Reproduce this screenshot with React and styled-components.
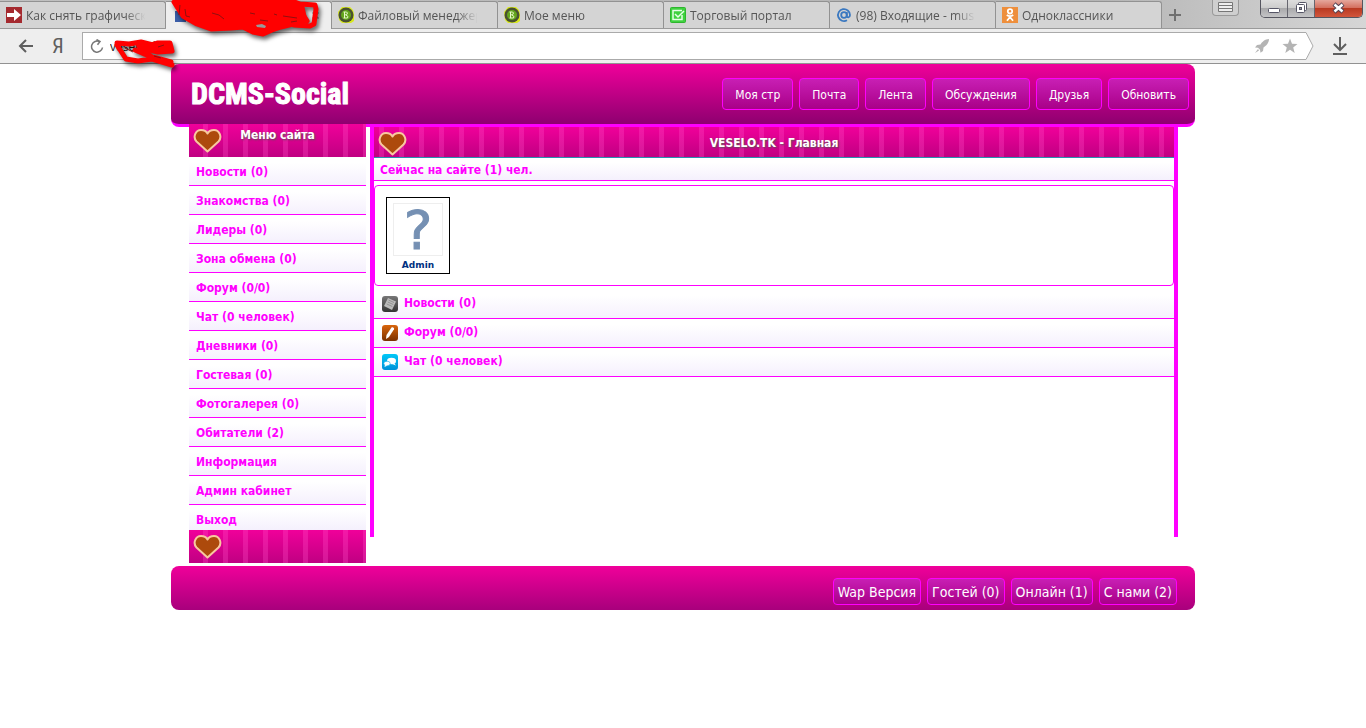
import React from 'react';
import styled, { createGlobalStyle } from 'styled-components';

const GlobalStyle = createGlobalStyle`
    * {
        box-sizing: border-box;
    }

    body {
        margin: 0;
        background-color: #ffffff;
        font-family: 'Tahoma', 'DejaVu Sans Condensed', 'DejaVu Sans', sans-serif;
        font-size: 12px;
    }
`

/* browser window */

const Browser = styled.header`
    position: relative;
    color: #555555;
    font-family: 'Open Sans', 'Noto Sans', sans-serif;
    border-bottom: 1px solid #929292;
`
const TabBar = styled.div`
    display: flex;
    align-items: flex-start;
    height: 29px;
    padding-top: 1px;
    background: linear-gradient(to right, #c0c0c0, #b4b4b4 80%, #d6d6d6);
    border-bottom: 1px solid #9a9a9a;
`
const Tab = styled.button`
    display: flex;
    align-items: center;
    gap: 4px;
    flex: 0 1 166px;
    min-width: 0;
    height: ${({ $active }) => ($active ? '28px' : '27px')};
    padding: 0 12px 0 6px;
    border: 1px solid #929292;
    border-width: 1px 1px 0 0;
    border-radius: 0 3px 0 0;
    background-color: ${({ $active }) => ($active ? '#eeeeee' : '#d4d4d4')};
    color: inherit;
    font-family: inherit;
    font-size: 12px;
    text-align: left;
    white-space: nowrap;

    svg {
        flex: none;
    }
`
const TabText = styled.span`
    flex: 1;
    min-width: 0;
    overflow: hidden;
    mask-image: linear-gradient(to right, #000 78%, transparent 94%);
`
const PlusButton = styled.button`
    width: 26px;
    height: 28px;
    padding: 0;
    border: 0;
    background: none;
    line-height: 0;
`
const Controls = styled.div`
    position: absolute;
    top: 0;
    right: 3px;
    display: flex;
    align-items: flex-start;
`
const SideButton = styled.button`
    display: flex;
    justify-content: center;
    width: 27px;
    height: 16px;
    margin-right: 21px;
    padding: 0;
    border: 1px solid #999999;
    border-top: 0;
    border-radius: 0 0 4px 4px;
    background-color: #cfcfcf;
`
const WindowButtons = styled.div`
    display: flex;
    height: 18px;
    border: 1px solid #55555f;
    border-top: 0;
    border-radius: 0 0 5px 5px;
    overflow: hidden;
`
const WindowButton = styled.button`
    display: flex;
    justify-content: center;
    width: 27px;
    padding: 0;
    border: 0;
    border-right: 1px solid #66666f;
    background: linear-gradient(#dddddd, #cccccc 45%, #a9a9ab 50%, #c4c4c6);
`
const CloseButton = styled(WindowButton)`
    width: 47px;
    border-right: 0;
    background: linear-gradient(#e5a79c, #d4705f 45%, #b93a22 50%, #d2563c);
`
const Toolbar = styled.div`
    display: flex;
    align-items: center;
    height: 34px;
    background-color: #eeeeee;
`
const ToolButton = styled.button`
    width: 32px;
    padding: 0;
    border: 0;
    background: none;
    color: #5f5f5f;
    line-height: 0;
`
const DownloadButton = styled(ToolButton)`
    width: 52px;
`
const YandexLink = styled.a`
    width: 32px;
    color: #5f5f5f;
    font-family: 'Roboto Condensed', 'Roboto', sans-serif;
    font-size: 21px;
    line-height: 24px;
    text-align: center;
    text-decoration: none;
`
const BackGroup = styled.div`
    display: flex;
    align-items: center;
    justify-content: flex-end;
    width: 82px;
    padding-right: 8px;
`
const AddressBar = styled.label`
    display: flex;
    align-items: center;
    flex: 1;
    height: 28px;
    padding-left: 7px;
    border: 1px solid #aaaaaa;
    border-right: 0;
    background-color: #ffffff;
`
const AddressInput = styled.input`
    flex: 1;
    min-width: 0;
    padding: 0 6px;
    border: 0;
    outline: 0;
    color: #222222;
    font-family: inherit;
    font-size: 12px;
`
const AddressIcons = styled.span`
    display: flex;
    align-items: center;
    gap: 12px;
    padding-right: 7px;
`
const Scribble = styled.svg`
    position: absolute;
    top: 0;
    left: 105px;
    z-index: 2;
    overflow: visible;
    pointer-events: none;

    .marker {
        filter: drop-shadow(2px 3px 2px rgba(0, 0, 0, 0.6));
    }
`

/* site */

const Page = styled.div`
    max-width: 1024px;
    margin: 0 auto;
`
const Header = styled.div`
    display: flex;
    align-items: center;
    justify-content: space-between;
    height: 63px;
    padding: 0 6px 0 20px;
    border-bottom: 3px solid #ff00ff;
    border-radius: 8px;
    background: linear-gradient(#f0009a, #8e0070);
`
const Logo = styled.a`
    color: #ffffff;
    font-family: 'Impact', 'Roboto Condensed', 'Open Sans Condensed', 'Liberation Sans', sans-serif;
    font-size: 30px;
    font-weight: bold;
    line-height: 36px;
    text-decoration: none;
    -webkit-text-stroke: 1px #ffffff;
`
const Nav = styled.nav`
    display: flex;
    gap: 6px;
`
const NavLink = styled.a`
    padding: 2px 12px 0;
    border: 1px solid #ff00ff;
    border-radius: 4px;
    background: linear-gradient(#c81fb4, #a90088);
    color: #ffffff;
    font-size: 12px;
    line-height: 28px;
    text-decoration: none;
    white-space: nowrap;
`
const FooterLink = styled(NavLink)`
    padding: 1px 4px 0;
    font-size: 14px;
    line-height: 24px;
`
const Columns = styled.div`
    display: flex;
    gap: 4px;
    padding: 0 17px 0 18px;
`
const Sidebar = styled.aside`
    position: relative;
    width: 177px;
    margin-top: -3px;
`
const Striped = styled.div`
    position: relative;
    display: flex;
    justify-content: center;
    background-image:
        linear-gradient(to right, rgba(255, 80, 200, 0.3) 5px, transparent 5px),
        linear-gradient(#f0009a, #c00082);
    background-position: ${({ $shift }) => $shift} 0, 0 0;
    background-size: 20px 100%, 100% 100%;
`
const MenuBar = styled(Striped)`
    height: 33px;
    padding-top: 3px;
`
const MainBar = styled(Striped)`
    align-items: center;
    height: 31px;
    padding-top: 2px;
    border-bottom: 1px solid #2a8fb0;
`
const Title = styled.h2`
    margin: 0;
    color: #ffffff;
    font-size: 12px;
    line-height: 16px;
    text-shadow: 1px 1px 2px #555555;
`
const Heart = styled.svg`
    position: absolute;
    top: 4px;
    left: 4px;
`
const List = styled.ul`
    margin: 0;
    padding: 0;
    list-style: none;
`
const MenuItem = styled.li`
    height: 29px;
    border-bottom: 1px solid #ff00ff;
    background: linear-gradient(#ffffff 20%, #f5f0fd);

    &:last-child {
        height: 25px;
        border-bottom: 0;
    }
`
const ItemLink = styled.a`
    display: flex;
    gap: 6px;
    padding: 0 7px;
    color: #ff00ff;
    font-weight: bold;
    line-height: 30px;
    text-decoration: none;
`
const MainItem = styled(MenuItem)`
    &:last-child {
        height: 29px;
        border-bottom: 1px solid #ff00ff;
    }

    a {
        padding: 0 8px;
        line-height: 26px;
    }

    svg {
        margin-top: 6px;
    }
`
const Main = styled.main`
    flex: 1;
    margin-bottom: 26px;
    border: 4px solid #ff00ff;
    border-width: 0 4px;
`
const Status = styled.div`
    height: 23px;
    padding-left: 6px;
    border-bottom: 1px solid #ff00ff;
    background: linear-gradient(#ffffff 20%, #f5f0fd);
    color: #ff00ff;
    font-weight: bold;
    line-height: 24px;
`
const Users = styled.div`
    margin: 4px 0;
    padding: 11px;
    border: 1px solid #ff00ff;
    border-radius: 4px;
`
const UserCard = styled.a`
    display: flex;
    flex-direction: column;
    align-items: center;
    width: 64px;
    height: 77px;
    padding-top: 5px;
    border: 1px solid #000000;
    color: #003080;
    font-family: 'Verdana', 'DejaVu Sans', sans-serif;
    font-size: 9px;
    font-weight: bold;
    line-height: 18px;
    text-decoration: none;
`
const Avatar = styled.span`
    width: 50px;
    height: 53px;
    border: 1px solid #eeeeee;
    color: #7590b3;
    font-family: 'DejaVu Sans', sans-serif;
    font-size: 54px;
    font-weight: normal;
    line-height: 54px;
    text-align: center;
    -webkit-text-stroke: 1px #7590b3;
`
const Footer = styled.footer`
    display: flex;
    justify-content: flex-end;
    margin-top: 3px;
    padding: 12px 18px 5px;
    border-radius: 8px;
    background: linear-gradient(#f0009a, #a8007c);
`

const ArrowFavicon = () => (
    <svg width="16" height="16" viewBox="0 0 16 16">
        <rect width="16" height="16" fill="#a52a2f" />
        <path d="M1 6h7V2l7 6-7 6v-4H1z" fill="#fff" />
    </svg>
)
const SiteFavicon = () => (
    <svg width="16" height="16" viewBox="0 0 16 16">
        <rect x="3" y="3" width="11" height="11" fill="#3b5ea8" />
    </svg>
)
const CoinFavicon = () => (
    <svg width="16" height="16" viewBox="0 0 16 16">
        <path d="M4 0h8l3 3 1 4v7l-3 2H4l-3-3-1-8z" fill="#d8e820" />
        <circle cx="8" cy="8" r="7.5" fill="#4a5230" />
        <circle cx="8" cy="8" r="5" fill="#63a51c" />
        <path d="M6.500 5v6M5.500 5h3l1 1-1 1.800h-2M8 8l2 1.500-.5 1.500h-4" stroke="#e8f8c8" fill="none" />
    </svg>
)
const CheckFavicon = () => (
    <svg width="16" height="16" viewBox="0 0 16 16">
        <rect x=".5" y=".5" width="15" height="15" rx="1" fill="#3fd23f" stroke="#2fb52f" />
        <path d="M12 8v4.500H3v-9h9M5 7l3 3 6-6" stroke="#e6ffe6" strokeWidth="1.500" fill="none" />
    </svg>
)
const MailFavicon = () => (
    <svg width="16" height="16" viewBox="0 0 16 16" fill="none" stroke="#3a78c0" strokeWidth="1.800">
        <circle cx="8" cy="8" r="2.800" />
        <path d="M10.800 5v4c0 2 3.200 2 3.200-1a6 6 0 1 0-3 5.300" />
    </svg>
)
const OkFavicon = () => (
    <svg width="16" height="16" viewBox="0 0 16 16">
        <rect width="16" height="16" fill="#ee8f3c" />
        <g stroke="#fff" strokeWidth="1.800" fill="none">
            <circle cx="8" cy="4.300" r="2.200" />
            <path d="M4.800 8c2 1.500 4.400 1.500 6.400 0M8 10l-3 3.800M8 10l3 3.800" />
        </g>
    </svg>
)

const HeartIcon = () => (
    <Heart width="29" height="26" viewBox="0 0 29 26">
        <path
            d="M14.500 23.500L3.500 13.500C-.5 9 2.500 2 8 2c3 0 5.500 1.500 6.500 3.500C15.500 3.500 18 2 21 2c5.500 0 8.500 7 4.500 11.500z"
            fill="#ad4a0c"
            stroke="#f8c8a0"
            strokeWidth="2"
            strokeLinejoin="round"
        />
    </Heart>
)

const NewsIcon = () => (
    <svg width="16" height="16" viewBox="0 0 16 16">
        <defs>
            <linearGradient id="news" x2="0" y2="1">
                <stop stopColor="#777" />
                <stop offset="1" stopColor="#333" />
            </linearGradient>
        </defs>
        <rect width="16" height="16" rx="3" fill="url(#news)" />
        <path d="M6 2l8 3.500-4 8.500-8-4z" fill="#bbb" />
        <path d="M6.500 4l5.500 2.500M5.800 6l5.500 2.500M4.800 8l5.500 2.500" stroke="#888" strokeWidth=".8" />
    </svg>
)
const ForumIcon = () => (
    <svg width="16" height="16" viewBox="0 0 16 16">
        <defs>
            <linearGradient id="forum" x2="0" y2="1">
                <stop stopColor="#d9650c" />
                <stop offset="1" stopColor="#7a3000" />
            </linearGradient>
        </defs>
        <rect width="16" height="16" rx="3" fill="url(#forum)" />
        <path d="M4 14l.5-4 5-7.500c1-1 3.200.2 2.500 1.800L7 12z" fill="#fff" />
    </svg>
)
const ChatIcon = () => (
    <svg width="16" height="16" viewBox="0 0 16 16">
        <defs>
            <linearGradient id="chat" x2="0" y2="1">
                <stop stopColor="#00c8f8" />
                <stop offset="1" stopColor="#0090d8" />
            </linearGradient>
        </defs>
        <rect width="16" height="16" rx="3" fill="url(#chat)" />
        <ellipse cx="9.500" cy="7" rx="4.500" ry="3.200" fill="#fff" />
        <path d="M12 9l2 2.500-4-1.500z" fill="#fff" />
        <ellipse cx="5" cy="9.500" rx="3.200" ry="2.300" fill="#fff" stroke="#00a8e8" strokeWidth=".6" />
        <path d="M3 11l-.5 2 3-1.500z" fill="#fff" />
    </svg>
)

const MarkerScribble = () => (
    <Scribble width="215" height="70" viewBox="0 0 215 70" aria-hidden="true">
        <g
            className="marker"
            fill="none"
            stroke="#ff0000"
            strokeWidth="5"
            strokeLinecap="round"
            strokeLinejoin="round"
        >
            <path fill="#ff0000" d="M69 2h118l10 5 3 14-24 6-9 3-9 4-10-2-10-5-12 1-20 1-14-5-14-8z" />
            <path d="M187 1l8 3 15 1 1 4-2 15-4 2-16-1M196 12l6 9" />
            <path fill="#ff0000" d="M53 43h12l2 8-14 1-16-4z" />
            <path d="M12 43l12 1 12-2 12 3M12 45l9 14 12 2 14-2 20 6M30 50l14 6 22 6M34 46l16 14" />
        </g>
        <g fill="none" stroke="#901010" strokeWidth="1">
            <path d="M75 5l-1 10M80 9l1 7 4 1M107 13l7 2 5 4M145 13l5 1M169 14l3 1M155 20l8 1M178 16l14 2M186 22l6-1" />
            <path d="M20 48l8 4M53 47l6-2M49 56l7 2" />
        </g>
        <path d="M151 25l6-1 4 2-1 2-8-1z" fill="#999" />
    </Scribble>
)

const tabs = [
    { icon: <ArrowFavicon />, text: 'Как снять графическ' },
    { icon: <SiteFavicon />, text: 'VESELO.TK', active: true },
    { icon: <CoinFavicon />, text: 'Файловый менеджер' },
    { icon: <CoinFavicon />, text: 'Мое меню' },
    { icon: <CheckFavicon />, text: 'Торговый портал' },
    { icon: <MailFavicon />, text: '(98) Входящие - musl' },
    { icon: <OkFavicon />, text: 'Одноклассники' },
]

const nav = ['Моя стр', 'Почта', 'Лента', 'Обсуждения', 'Друзья', 'Обновить']

const menu = [
    'Новости (0)',
    'Знакомства (0)',
    'Лидеры (0)',
    'Зона обмена (0)',
    'Форум (0/0)',
    'Чат (0 человек)',
    'Дневники (0)',
    'Гостевая (0)',
    'Фотогалерея (0)',
    'Обитатели (2)',
    'Информация',
    'Админ кабинет',
    'Выход',
]

const sections = [
    { icon: <NewsIcon />, text: 'Новости (0)' },
    { icon: <ForumIcon />, text: 'Форум (0/0)' },
    { icon: <ChatIcon />, text: 'Чат (0 человек)' },
]

const footer = ['Wap Версия', 'Гостей (0)', 'Онлайн (1)', 'С нами (2)']

const BrowserChrome = () => {
    return (
        <Browser>
            <TabBar>
                {tabs.map(({ icon, text, active }) => (
                    <Tab key={text} type="button" $active={active}>
                        {icon}
                        <TabText>{text}</TabText>
                        {active && (
                            <svg width="7" height="7" viewBox="0 0 7 7" stroke="#888" strokeWidth="1.500">
                                <path d="M.5 .5l6 6M6.500 .5l-6 6" />
                            </svg>
                        )}
                    </Tab>
                ))}
                <PlusButton type="button" aria-label="Новая вкладка">
                    <svg width="12" height="12" viewBox="0 0 12 12" stroke="#707070" strokeWidth="2">
                        <path d="M6 0v12M0 6h12" />
                    </svg>
                </PlusButton>
            </TabBar>
            <Toolbar>
                <BackGroup>
                    <ToolButton type="button" aria-label="Назад">
                        <svg width="16" height="14" viewBox="0 0 16 14" fill="none" stroke="currentColor" strokeWidth="2">
                            <path d="M15 7H2M8 1L2 7l6 6" />
                        </svg>
                    </ToolButton>
                    <YandexLink href="#yandex">Я</YandexLink>
                </BackGroup>
                <AddressBar>
                    <svg width="14" height="15" viewBox="0 0 14 15" fill="none" stroke="#777" strokeWidth="1.500">
                        <path d="M12.500 8.500a5.500 5.500 0 1 1-3-5.800M6.500 .5l3.500 2-2.500 3.300" />
                    </svg>
                    <AddressInput aria-label="Адрес" defaultValue="veselo.tk" />
                    <AddressIcons>
                        <svg width="16" height="16" viewBox="0 0 16 16" fill="#b4b4b4">
                            <path d="M15 1c-4 0-7 3-8.500 5.500L3 7 1 9.500l3 .3 2 2 .5 3L9 13l.5-3.500C12 8 15 5 15 1zM4 11l-3 4 4-2.500z" />
                        </svg>
                        <svg width="16" height="16" viewBox="0 0 16 16" fill="#b4b4b4">
                            <path d="M8 0.500l2 5.300 5.500.2-4.300 3.500 1.500 5.500L8 11.800 3.300 15l1.500-5.500L.5 6l5.500-.2z" />
                        </svg>
                    </AddressIcons>
                </AddressBar>
                <svg width="9" height="28" viewBox="0 0 9 28">
                    <path d="M0 .5h1L8 14l-7 13.500H0" fill="#fff" stroke="#aaa" />
                </svg>
                <DownloadButton type="button" aria-label="Загрузки">
                    <svg width="16" height="18" viewBox="0 0 16 18" fill="none" stroke="currentColor" strokeWidth="2">
                        <path d="M8 0v12M2 7l6 6 6-6M1 17h14" />
                    </svg>
                </DownloadButton>
            </Toolbar>
            <Controls>
                <SideButton type="button" aria-label="Меню">
                    <svg width="17" height="14" viewBox="0 0 17 14" fill="#eee" stroke="#777">
                        <path d="M1.500 2.500h14v3h-14zM1.500 5.500h14v3h-14zM1.500 8.500h14v3h-14z" />
                    </svg>
                </SideButton>
                <WindowButtons>
                    <WindowButton type="button" aria-label="Свернуть">
                        <svg width="13" height="16" viewBox="0 0 13 16">
                            <rect x=".5" y="8.500" width="11" height="4" rx="1" fill="#fff" stroke="#555566" />
                        </svg>
                    </WindowButton>
                    <WindowButton type="button" aria-label="Восстановить">
                        <svg width="13" height="16" viewBox="0 0 13 16" fill="#fff" stroke="#555566">
                            <rect x="3.500" y="2.500" width="8" height="8" rx="1" />
                            <rect x="1.500" y="4.500" width="8" height="8" rx="1" />
                            <rect x="4.500" y="7.500" width="2" height="2" fill="#999" />
                        </svg>
                    </WindowButton>
                    <CloseButton type="button" aria-label="Закрыть">
                        <svg width="13" height="16" viewBox="0 0 13 16">
                            <path d="M2 4l9 8M11 4l-9 8" stroke="#554455" strokeWidth="4.500" />
                            <path d="M2.500 4.500l8 7M10.500 4.500l-8 7" stroke="#fff" strokeWidth="2.500" />
                        </svg>
                    </CloseButton>
                </WindowButtons>
            </Controls>
            <MarkerScribble />
        </Browser>
    )
}

const App = () => {
    return (
        <>
            <GlobalStyle />
            <BrowserChrome />
            <Page>
                <Header>
                    <Logo href="#home">DCMS-Social</Logo>
                    <Nav>
                        {nav.map((text) => (
                            <NavLink key={text} href="#nav">{text}</NavLink>
                        ))}
                    </Nav>
                </Header>
                <Columns>
                    <Sidebar>
                        <MenuBar $shift="14px">
                            <HeartIcon />
                            <Title>Меню сайта</Title>
                        </MenuBar>
                        <List>
                            {menu.map((text) => (
                                <MenuItem key={text}>
                                    <ItemLink href="#menu">{text}</ItemLink>
                                </MenuItem>
                            ))}
                        </List>
                        <MenuBar $shift="14px">
                            <HeartIcon />
                        </MenuBar>
                    </Sidebar>
                    <Main>
                        <MainBar $shift="5px">
                            <HeartIcon />
                            <Title>VESELO.TK - Главная</Title>
                        </MainBar>
                        <Status>Сейчас на сайте (1) чел.</Status>
                        <Users>
                            <UserCard href="#admin">
                                <Avatar>?</Avatar>
                                Admin
                            </UserCard>
                        </Users>
                        <List>
                            {sections.map(({ icon, text }) => (
                                <MainItem key={text}>
                                    <ItemLink href="#section">
                                        {icon}
                                        {text}
                                    </ItemLink>
                                </MainItem>
                            ))}
                        </List>
                    </Main>
                </Columns>
                <Footer>
                    <Nav>
                        {footer.map((text) => (
                            <FooterLink key={text} href="#footer">{text}</FooterLink>
                        ))}
                    </Nav>
                </Footer>
            </Page>
        </>
    )
}

export default App
